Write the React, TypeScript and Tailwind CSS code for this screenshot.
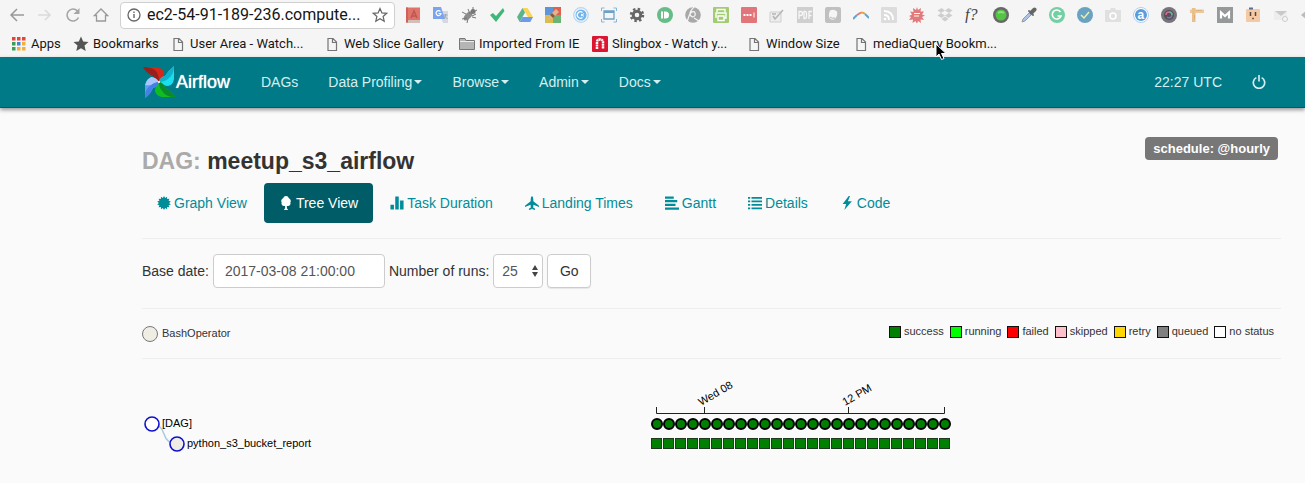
import React from "react";

const sans = "font-['Liberation_Sans',Arial,sans-serif]";

function Svg({ children, size = 16, label }: { children: React.ReactNode; size?: number; label?: string }) {
  return (
    <svg width={size} height={size} viewBox="0 0 16 16" className="shrink-0" fill="none" aria-label={label} aria-hidden={label ? undefined : true}>
      {children}
    </svg>
  );
}

const extensions: { name: string; art: React.ReactNode }[] = [
  { name: "Dictionary", art: <><rect x="1" y="0.5" width="14" height="15" fill="#e0746a" /><path d="M1 13h14v2.500H1z" fill="#c9c3bf" /><path d="M1 .5h2v15H1z" fill="#d0605a" /><path d="M6 11l3-7 3 7M7 9h4" stroke="#bd5750" strokeWidth="1.500" /></> },
  { name: "Translate", art: <><path d="M6 4h9v12h-5z" fill="#d5d9df" /><path d="M0 0h8l4 12H0z" fill="#7ba4ee" /><path d="M7.500 4.500A2.500 2.500 0 1 0 8 6.500H5.500" stroke="#fff" strokeWidth="1.200" /><path d="M10.500 8h4M12.500 7v1c0 2-1 3-2 4m1-3 3 3" stroke="#9aa5b8" /></> },
  { name: "Bug", art: <><ellipse cx="7" cy="9" rx="3" ry="5.500" fill="#8c8c8c" transform="rotate(45 7 9)" /><circle cx="12" cy="4.500" r="2.500" fill="#777" /><path d="M5 7 1 5m5 6-5 1m6 0-1 4m3-9L7 2m4 8 4 1m-4-2 4-2m-3-4V0m2 4 2-1" stroke="#777" /></> },
  { name: "Check", art: <path d="M1 8l3-2 3 3 7-8 1.500 3L7 15z" fill="#3cb878" /> },
  { name: "Drive", art: <><path d="M5.500 1h5L16 10h-5z" fill="#f8d55a" /><path d="M5.500 1 0 10l2.700 5L8 5.500z" fill="#5bb48b" /><path d="M5.500 10H16l-2.700 5H2.700z" fill="#6b9bea" /></> },
  { name: "Paint", art: <><path d="M0 0h8v8H0z" fill="#5d96d8" /><path d="M8 0h8v8H8z" fill="#e0604f" /><path d="M0 8h8v8H0z" fill="#ddbb4c" /><path d="M8 8h8v8H8z" fill="#6cb474" /><path d="m2 14 3-6 6-6 3 3-6 6z" fill="#e0b48e" /><path d="m5 8 3 3 2-2-3-3z" fill="#8e5838" /></> },
  { name: "Copyright", art: <><circle cx="8" cy="8" r="7.300" stroke="#b4d7f6" strokeWidth="1.200" /><circle cx="8" cy="8" r="5.500" fill="#70b4ee" /><path d="M9.500 5.500a3.200 3.200 0 1 0 0 5" stroke="#fff" strokeWidth="1.200" /><path d="M8 7l3 2.500m0-3L8 9" stroke="#fff" /></> },
  { name: "Window resizer", art: <><path d="M3 4h10v8H3z" stroke="#6da1c8" strokeWidth="1.300" /><path d="M3 5h10" stroke="#6da1c8" strokeWidth="2" /><path d="M.5 4V1h3m9 0h3v3m0 8v3h-3m-9 0h-3v-3" stroke="#83b6dc" /></> },
  { name: "Settings", art: <><circle cx="8" cy="8" r="3.800" stroke="#666" strokeWidth="3" /><circle cx="8" cy="8" r="6" stroke="#666" strokeWidth="2.500" strokeDasharray="2.400 2.310" /></> },
  { name: "Pushbullet", art: <><circle cx="8" cy="8" r="8" fill="#67bd88" /><path d="M5 4.500v7" stroke="#fff" strokeWidth="2" /><path d="M7 4.500h1.500a3.500 3.500 0 0 1 0 7H7z" fill="#fff" /></> },
  { name: "Swirl", art: <><circle cx="8" cy="8" r="7.800" fill="#a8a8a8" /><path d="M9 0C5 4 4 7 6 9s5 0 4-3-5-1-6 3l-2 6m7-4 5 3" stroke="#f5f5f5" strokeWidth="1.200" /></> },
  { name: "Print", art: <><rect width="16" height="16" rx="1" fill="#a3cb72" /><path d="M4 5V2.500h8V5M3 11V6h10v5h-2m-6-2h6v4.500H5z" stroke="#fff" strokeWidth="1.400" /></> },
  { name: "Passwords", art: <><rect width="16" height="16" rx="1" fill="#e2757a" /><path d="M2.500 8h8" stroke="#fff" strokeWidth="2" strokeDasharray="2 1" /><path d="M13 5.500v5" stroke="#fff" /></> },
  { name: "Form", art: <><path d="M1 5h11v10H1z" fill="#ededed" stroke="#cfcfcf" /><path d="m4 9 2 3 8-9M3 7h4" stroke="#b5b5b5" strokeWidth="1.500" /></> },
  { name: "PDF", art: <><rect width="16" height="16" fill="#cfcfcf" /><path d="M2 12V4.500h1.500a1.500 1.500 0 0 1 0 4H2M7 4.500v7h1q1.500 0 1.500-2v-3q0-2-1.500-2zm5 7.500V4.500h3m-3 4h2.500" stroke="#f8f8f8" strokeWidth="1.300" /></> },
  { name: "Evernote", art: <><rect width="16" height="16" rx="2" fill="#c0c0c0" /><path d="M5 3.500q4-2 7 1 1 5-3 8-6 1-5-6z" fill="#f5f5f5" /><path d="M5 10q2 2 5 1" stroke="#b5b5b5" /></> },
  { name: "Rainbow", art: <><path d="M0 12 4 8" stroke="#62a4d8" strokeWidth="2" /><path d="m4 8 4-2.500" stroke="#e07a69" strokeWidth="2" /><path d="M8 5.500q3 0 4 1.500" stroke="#efa03a" strokeWidth="2" /><path d="m12 7 4 4" stroke="#62a5cd" strokeWidth="2" /></> },
  { name: "Feed", art: <><rect width="16" height="16" rx="1" fill="#dcdcdc" /><path d="M3 8q5 0 5 5M3 4q9 0 9 9" stroke="#fff" strokeWidth="1.800" /><circle cx="4" cy="12" r="1.300" fill="#fff" /></> },
  { name: "Burst", art: <><path d="m8 0 1 3 3-2-.5 3.500 3.500 0-2 3 3 1-3 1.500 2 3-3.500-.5.500 3.500-3-2-1 3-1.500-3-3 2 .5-3.500-4 .5 2-3L0 9l3-1.500-2-3 3.500.5L4 1l3 2z" fill="#e07a7b" /><path d="M5 6.500h6M5 9h5" stroke="#fff" /></> },
  { name: "Dropbox", art: <path d="m4.500 1 3.500 2.500L4 6 .5 3.500zM11.500 1 8 3.500 12 6l3.500-2.500zM.5 8.500 4 6l4 2.500L4.500 11zM15.500 8.500 12 6 8 8.500l3.500 2.500zM4.500 12 8 9.500l3.500 2.500L8 14.500z" fill="#cecece" /> },
  { name: "Font finder", art: <text x="0" y="13" className="font-['Liberation_Serif',serif] text-[16px] italic" fill="#444">f?</text> },
  { name: "Status", art: <><circle cx="8" cy="8" r="8" fill="#676767" /><circle cx="8" cy="8" r="5.500" fill="#55c446" /><path d="M5 6q3-2 6 0" stroke="#8ae17e" strokeWidth="2" /></> },
  { name: "Color picker", art: <><path d="m1 15 1-3 6.500-6.500 2 2L4 14z" fill="#a9c4e8" stroke="#9a9a9a" /><path d="m8 4 4 4" stroke="#777" strokeWidth="2" strokeLinecap="round" /><path d="m10.500 5.500 3-3" stroke="#666" strokeWidth="4" strokeLinecap="round" /></> },
  { name: "Grammarly", art: <><circle cx="8" cy="8" r="8" fill="#74cfa5" /><path d="M11.500 5A4.500 4.500 0 1 0 12 9H8.500" stroke="#fff" strokeWidth="1.600" /></> },
  { name: "Verified", art: <><circle cx="8" cy="8" r="8" fill="#6aa3c2" /><path d="m4 8 3 3 5-6" stroke="#e7efb0" strokeWidth="1.500" /></> },
  { name: "Camera", art: <><path d="M0 3h5l1-2h4l1 2h5v12H0z" fill="#e0e0e0" /><circle cx="8" cy="9" r="3" stroke="#fff" strokeWidth="1.500" /></> },
  { name: "Alexa", art: <><circle cx="8" cy="8" r="7.500" fill="#fff" stroke="#b0cff0" /><circle cx="8" cy="8" r="6" fill="#5b9cdc" /><text x="4.500" y="12" className="font-['Liberation_Sans',sans-serif] text-[12px] font-bold" fill="#fff">a</text></> },
  { name: "Lens", art: <><circle cx="8" cy="8" r="8" fill="#77757b" /><circle cx="8" cy="8" r="5" fill="#555159" /><path d="M5 8a3 3 0 0 1 3-3" stroke="#d66b96" strokeWidth="1.500" /><path d="M8 5a3 3 0 0 1 3 3" stroke="#72b5a2" strokeWidth="1.500" /><path d="M11 8a3 3 0 0 1-5 2" stroke="#8276b8" strokeWidth="1.500" /></> },
  { name: "Ruler", art: <><path d="M1 2.500h14v3.500H1z" fill="#ecc99b" /><path d="M3 1h3.500v14H3z" fill="#e9bf8c" /><path d="M8 3v1m2-1v1m2-1v1M5 9h1m-1 2h1" stroke="#c99a67" /></> },
  { name: "Gmail", art: <><rect width="16" height="16" fill="#969999" /><path d="M4 11.500V5.500l4 3.500 4-3.500v6" stroke="#fff" strokeWidth="2.200" /></> },
  { name: "Face", art: <><rect x="1" y="2" width="14" height="13" rx="1" fill="#f4c9a5" /><path d="M4 1.500h4" stroke="#5c6c9a" strokeWidth="2" /><path d="M5.500 5v4M10.500 5v4" stroke="#54443a" strokeWidth="1.500" /><path d="M7 11.500h2" stroke="#8b5c45" strokeWidth="1.500" /></> },
  { name: "Mail", art: <><path d="M1 4h13v9H1z" fill="#ededed" /><path d="M2 4h12L8 9z" fill="#c9c9c9" /><circle cx="12" cy="12" r="2.500" fill="#f5f5f5" stroke="#ccc" /></> },
  { name: "Tag", art: <path d="M0 8l6-5v10z" fill="#bbb" /> },
];

const docArt = <path d="M4 2.500h5l3.500 3.500v8.500H4zM8.500 2.500V6.500h4" stroke="#757575" strokeWidth="1.200" />;

const appColors = ["#e0443a", "#e0443a", "#e0443a", "#3a9d58", "#4285d4", "#efb13a", "#3a9d58", "#efb13a", "#efb13a"];

const bookmarks: { label: string; art: React.ReactNode; width: string }[] = [
  { label: "Apps", width: "w-[29px]", art: appColors.map((c, i) => <rect key={i} x={1 + (i % 3) * 5} y={1 + Math.floor(i / 3) * 5} width="3.500" height="3.500" fill={c} />) },
  { label: "Bookmarks", width: "w-[64px]", art: <path d="m8 .5 2.200 5 5.300.5-4 3.600 1.200 5.400L8 12.200 3.300 15l1.200-5.400L.5 6l5.300-.5z" fill="#555" /> },
  { label: "User Area - Watch...", width: "w-[121px]", art: docArt },
  { label: "Web Slice Gallery", width: "w-[102px]", art: docArt },
  { label: "Imported From IE", width: "w-[100px]", art: <><path d="M.5 13.500v-11h5.500l1 2h8.500v9z" fill="#b5b5b5" stroke="#777" /><path d="M1 5.500h14" stroke="#eee" /></> },
  { label: "Slingbox - Watch y...", width: "w-[121px]", art: <><rect width="16" height="16" rx="1" fill="#dc1631" /><path d="M5 13V6q0-2.500 3-2.500T11 6v7" stroke="#fff" strokeWidth="2.500" strokeDasharray="2 .5" /></> },
  { label: "Window Size", width: "w-[74px]", art: docArt },
  { label: "mediaQuery Bookm...", width: "w-[124px]", art: docArt },
];

function Browser() {
  return (
    <header className="relative overflow-hidden bg-[#f5f5f5] font-[Roboto,sans-serif] text-[#151515]">
      <div className="flex h-[30px] items-center">
        <div className="flex shrink-0 gap-3 pl-[9px]">
          <button aria-label="Back"><Svg><path d="M15 8H2m6-6L2 8l6 6" stroke="#999" strokeWidth="1.500" /></Svg></button>
          <button aria-label="Forward"><Svg><path d="M1 8h12M8 3l5 5-5 5" stroke="#dadada" strokeWidth="1.500" /></Svg></button>
          <button aria-label="Reload"><Svg><path d="M13.500 10.500A6 6 0 1 1 12.500 4" stroke="#a5a5a5" strokeWidth="1.600" /><path d="M14.500 1v6h-6z" fill="#a5a5a5" /></Svg></button>
          <button aria-label="Home"><Svg><path d="M1.500 8.500 8 2l6.500 6.500H12.500V14h-9V8.500z" stroke="#999" strokeWidth="1.300" /></Svg></button>
        </div>
        <div className="ml-[11px] flex h-[27px] w-[275px] shrink-0 items-center rounded border border-[#d0d0d0] bg-white px-[6px]">
          <Svg><circle cx="7" cy="8" r="6" stroke="#666" strokeWidth="1.300" /><path d="M7 7v4M7 4.500v1.500" stroke="#666" strokeWidth="1.400" /></Svg>
          <input aria-label="Address" readOnly value="ec2-54-91-189-236.compute..." className="ml-1 min-w-0 flex-1 bg-transparent text-[16px] outline-none" />
          <button aria-label="Bookmark this page"><Svg><path d="m8 1.500 1.900 4.400 4.800.4-3.600 3.200 1.100 4.700L8 11.700l-4.200 2.500 1.100-4.700L1.300 6.300l4.800-.4z" stroke="#666" strokeWidth="1.200" /></Svg></button>
        </div>
        <div className="ml-[10px] flex shrink-0 gap-3">
          {extensions.map((e) => (
            <button key={e.name} aria-label={e.name}><Svg>{e.art}</Svg></button>
          ))}
        </div>
      </div>
      <nav className="flex h-[27px] items-center gap-[13px] pl-[11px] text-[13px] whitespace-nowrap">
        {bookmarks.map((b) => (
          <a key={b.label} href="#" className="flex shrink-0 items-center gap-1">
            <Svg>{b.art}</Svg>
            <span className={b.width}>{b.label}</span>
          </a>
        ))}
      </nav>
    </header>
  );
}

function Pinwheel() {
  return (
    <svg width="34" height="34" viewBox="0 0 34 34" className="shrink-0" aria-hidden="true">
      <path d="M1 2h13q7 1 8 6 0 4-5 9-5-1-6-6Q4 8 1 2" fill="#d5281b" />
      <path d="M1 2q9 0 13 4 3 4 3 11-5-1-6-6Q4 8 1 2" fill="#98201a" />
      <path d="M32 1v13q-1 6-6 7-4 0-9-4 1-5 6-6 4-6 9-10" fill="#19dfee" />
      <path d="M32 1q0 8-5 12-4 4-10 4 1-5 6-6 4-6 9-10" fill="#10b2cb" />
      <path d="M33 32H20q-6-1-7-6 0-4 4-9 5 1 6 6 7 3 10 9" fill="#10bd20" />
      <path d="M33 32q-9 0-12-5-4-4-4-10 5 1 6 6 7 3 10 9" fill="#0b8a2b" />
      <path d="M3 33V20q1-6 6-7 4 0 8 4-1 5-6 6-3 7-8 10" fill="#5b9df8" />
      <path d="M4 18q1-4 5-6 5 0 8 5-6 4-14 3z" fill="#a9c6fa" />
      <path d="M3 33q0-9 5-12 4-4 9-4-1 5-6 6-3 7-8 10" fill="#4580e4" />
      <circle cx="17" cy="17" r="1" fill="#fff" />
    </svg>
  );
}

function TopNav() {
  const items = [
    { label: "DAGs", caret: false },
    { label: "Data Profiling", caret: true },
    { label: "Browse", caret: true },
    { label: "Admin", caret: true },
    { label: "Docs", caret: true },
  ];
  return (
    <nav className="relative flex h-[51px] items-center border-b border-[#005c66] bg-[#007a87] pr-6 pl-[142px] text-[14px] text-[#d5eef0] shadow-[0_2px_4px_rgba(0,0,0,0.4)]">
      <a href="#" className="flex w-[104px] shrink-0 items-center text-[18px] text-white [text-shadow:0_0_1px_white]">
        <Pinwheel />
        Airflow
      </a>
      {items.map((i) => (
        <a key={i.label} href="#" className="flex items-center gap-[2px] px-[15px] whitespace-nowrap">
          {i.label}
          {i.caret && <svg width="8" height="4" viewBox="0 0 8 4" aria-hidden="true"><path d="M0 0h8L4 4z" fill="currentColor" /></svg>}
        </a>
      ))}
      <span className="ml-auto px-[15px] whitespace-nowrap">22:27 UTC</span>
      <button aria-label="Log out" className="px-[15px]">
        <Svg size={14}><path d="M5 3a6.500 6.500 0 1 0 6 0M8 0v7.500" stroke="currentColor" strokeWidth="1.900" /></Svg>
      </button>
    </nav>
  );
}

const burst = Array.from({ length: 28 }, (_, i) => {
  const r = i % 2 ? 5.8 : 8;
  const a = (i * Math.PI) / 14;
  return `${(8 + r * Math.sin(a)).toFixed(2)},${(8 - r * Math.cos(a)).toFixed(2)}`;
}).join(" ");

const tabs: { label: string; art: React.ReactNode; active?: boolean }[] = [
  { label: "Graph View", art: <polygon points={burst} fill="currentColor" /> },
  { label: "Tree View", active: true, art: <path d="M8 0a3.500 3.500 0 0 1 3.300 2.500A3.500 3.500 0 0 1 13 7.500 3 3 0 0 1 10 11.500H9V14l1.500 2h-5L7 14v-2.500H6a3 3 0 0 1-3-4A3.500 3.500 0 0 1 4.700 2.500 3.500 3.500 0 0 1 8 0" fill="currentColor" /> },
  { label: "Task Duration", art: <path d="M.5 10h4v5.500h-4zM6 0.500h4v15H6zM11.500 5h4v10.500h-4z" fill="currentColor" /> },
  { label: "Landing Times", art: <path d="M8 0q1.500 1 1.500 4v2l6.500 5v1.500l-6.300-2.500-.4 3 2.200 1.700V16L8.500 15 8 14l-.5 1-3 1v-1.300L6.700 13l-.4-3L0 12.500V11l6.500-5V4Q6.500 1 8 0" fill="currentColor" /> },
  { label: "Gantt", art: <path d="M0 .5h10v2.500H0zM0 4.700h14v2.500H0zM0 8.900h12v2.500H0zM0 13.100h16v2.500H0z" fill="currentColor" /> },
  { label: "Details", art: <path d="M0 1h2.500v2H0zM4 1h12v2H4zM0 5h2.500v2H0zM4 5h12v2H4zM0 9h2.500v2H0zM4 9h12v2H4zM0 13h2.500v2H0zM4 13h12v2H4z" fill="currentColor" /> },
  { label: "Code", art: <path d="M10 0 3 9h4l-2 7 8.500-10H9l2.500-6z" fill="currentColor" /> },
];

const legend = [
  { label: "success", color: "bg-[#008000]" },
  { label: "running", color: "bg-[#00ff00]" },
  { label: "failed", color: "bg-[#ff0000]" },
  { label: "skipped", color: "bg-[#ffc0cb]" },
  { label: "retry", color: "bg-[#ffd700]" },
  { label: "queued", color: "bg-[#808080]" },
  { label: "no status", color: "bg-white" },
];

function TreeChart() {
  const runs = Array.from({ length: 25 }, (_, i) => 515 + i * 12);
  return (
    <svg width="820" height="110" viewBox="0 0 820 110" className="block text-[11px]" fill="#000" role="img" aria-label="DAG run tree">
      <path d="M10 65Q19 65 22 75T35 85" fill="none" stroke="#a9cbe2" strokeWidth="1.500" />
      <circle cx="10" cy="65" r="7" fill="#fff" stroke="#1010cf" strokeWidth="1.600" />
      <text x="20" y="68">[DAG]</text>
      <circle cx="35" cy="85" r="7" fill="#f0ede4" stroke="#1010cf" strokeWidth="1.600" />
      <text x="45" y="88">python_s3_bucket_report</text>
      <path d="M514.500 48v6.500h288V48M562.500 48v6.500M706.500 48v6.500" fill="none" stroke="#222" />
      <text transform="translate(559 47) rotate(-30)">Wed 08</text>
      <text transform="translate(703 47) rotate(-30)">12 PM</text>
      {runs.map((x) => (
        <g key={x} fill="#008000">
          <circle cx={x} cy="65" r="5" stroke="#000" strokeWidth="2" />
          <rect x={x - 5.5} y="79.500" width="10" height="10" stroke="#1d3a1d" />
        </g>
      ))}
    </svg>
  );
}

export default function App() {
  return (
    <div className={`relative min-h-screen overflow-x-hidden bg-[#fafafa] text-[#333] ${sans}`}>
      <Browser />
      <TopNav />
      <svg width="12" height="18" viewBox="0 0 12 18" className="absolute top-[43px] left-[935px]" aria-hidden="true">
        <path d="M1 1v13l3-3 2.500 5.500 2.500-1L6.500 10.500H11z" fill="#000" stroke="#fff" strokeWidth="1" />
      </svg>
      <main className="mr-6 ml-[142px] pt-[29px]">
        <div className="flex items-start justify-between">
          <h1 className="mt-[10px] text-[23px] leading-7 font-bold"><span className="text-[#aaa]">DAG:</span> meetup_s3_airflow</h1>
          <span className="mr-[3px] rounded bg-[#777] px-2 text-[13px] leading-[23px] font-bold text-white">schedule: @hourly</span>
        </div>
        <nav className="mt-2 flex gap-[2px]">
          {tabs.map((t) => (
            <a key={t.label} href="#" className={`flex h-10 items-center gap-[3px] rounded px-[15px] text-[14px] whitespace-nowrap ${t.active ? "bg-[#005c66] text-white" : "text-[#008c99]"}`}>
              <Svg size={14}>{t.art}</Svg>
              {t.label}
            </a>
          ))}
        </nav>
        <hr className="mt-[15px] border-[#eeeeee]" />
        <form className="mt-[15px] flex items-center gap-1 text-[14px]" onSubmit={(e) => e.preventDefault()}>
          <label htmlFor="base-date">Base date:</label>
          <input id="base-date" defaultValue="2017-03-08 21:00:00" className="h-[34px] w-[172px] rounded border border-[#ccc] bg-white px-[11px] text-[#555]" />
          <label htmlFor="runs">Number of runs:</label>
          <div className="relative">
            <select id="runs" defaultValue="25" className="block h-[34px] w-[50px] appearance-none rounded border border-[#ccc] bg-white pl-2 text-[#555]">
              <option>5</option>
              <option>25</option>
              <option>50</option>
              <option>100</option>
            </select>
            <svg width="6" height="12" viewBox="0 0 6 12" className="pointer-events-none absolute top-[11px] right-[5px]" aria-hidden="true">
              <path d="M0 5h6L3 0zM0 7h6l-3 5z" fill="#444" />
            </svg>
          </div>
          <button className="h-[34px] w-[44px] rounded border border-[#ccc] bg-white shadow-[0_1px_1px_rgba(0,0,0,0.08)]">Go</button>
        </form>
        <hr className="mt-5 border-[#eeeeee]" />
        <div className="flex h-[49px] items-center justify-between text-[11px]">
          <div className="flex items-center gap-1">
            <span className="size-4 rounded-full border border-[#777] bg-[#f0ede4]" />
            BashOperator
          </div>
          <ul className="mr-[7px] flex gap-[6px] pb-1">
            {legend.map((l) => (
              <li key={l.label} className="flex items-center gap-[3px]">
                <span className={`size-3 border border-[#111] ${l.color}`} />
                {l.label}
              </li>
            ))}
          </ul>
        </div>
        <hr className="border-[#eeeeee]" />
        <TreeChart />
      </main>
    </div>
  );
}
